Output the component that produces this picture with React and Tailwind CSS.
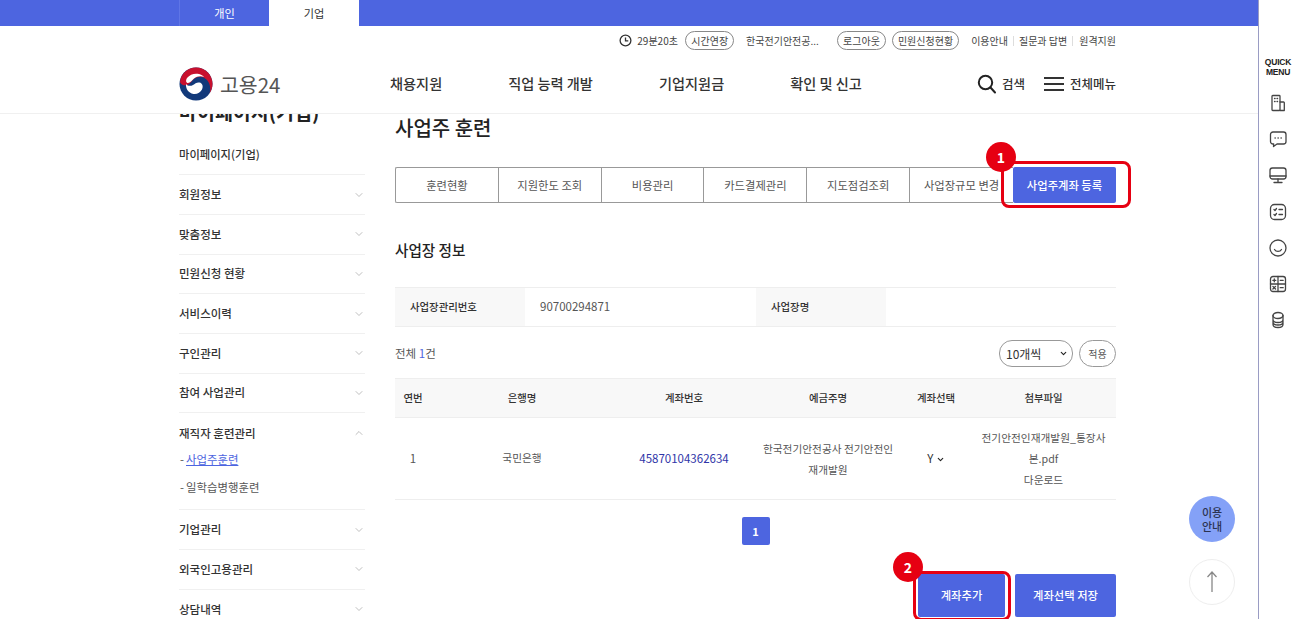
import React from "react";
import { ChevronDown, ChevronUp } from "lucide-react";

const menu = [
  { t: "회원정보" }, { t: "맞춤정보" }, { t: "민원신청 현황" }, { t: "서비스이력" }, { t: "구인관리" }, { t: "참여 사업관리" },
];
const menu2 = [{ t: "기업관리" }, { t: "외국인고용관리" }, { t: "상담내역" }];
const tabs = ["훈련현황", "지원한도 조회", "비용관리", "카드결제관리", "지도점검조회", "사업장규모 변경"];

function SideRow({ t }) {
  return (
    <div className="h-[39.7px] flex items-center justify-between border-b border-[#f0f0f0]">
      <span className="text-[11.500px] font-medium text-[#333]">{t}</span>
      <ChevronDown size={12} strokeWidth={1.5} className="text-[#aaa]" />
    </div>
  );
}

function Pill({ children, className = "" }) {
  return <span className={"h-[19px] px-[5px] flex items-center rounded-full border border-[#888] text-[10px] text-[#444] whitespace-nowrap " + className}>{children}</span>;
}

function Logo() {
  return (
    <svg width="34" height="34" viewBox="0 0 34 34" className="shrink-0">
      <circle cx="17" cy="17" r="16.5" fill="#12397a" />
      <path d="M1 15C2 6 9 .5 17 .5c9 0 16.5 7 16.5 16.5 0 4-1.400 7-3 9.500 1-3 1-6 .2-8.500C29 12 24 9 19 10c-3 .6-5 2.500-6.500 4.500C10 18 6 19 4 18c-1.500-.6-2.500-1.500-3-3z" fill="#c8102e" />
      <path d="M7 17c1.500 2 4.500 2.500 7 1 2-1.500 4-3 6.500-2.500 3 .5 4 4 2.500 7-1.500 3-5 5-8.500 4.500C9 26 6.500 21 7 17z" fill="#fff" />
      <path d="M8 11c3-4 8-5 12-4 2 .5 4 1.500 5 3-3-1.500-7-1-10 1.500-2 1.700-4 4.500-6 4.500-2 0-2.500-2.500-1-5z" fill="#fff" />
    </svg>
  );
}

const I = ({ children }) => (
  <svg width="20" height="20" viewBox="0 0 20 20" fill="none" stroke="#444" strokeWidth="1.300" strokeLinecap="round" strokeLinejoin="round">{children}</svg>
);

const quick = [
  <I key="1"><rect x="4" y="2.500" width="8" height="15" rx=".8" /><path d="M12 9h3.500a.8.800 0 0 1 .8.800v7.700H12M6.500 5.500h.6M9 5.500h.6M6.500 8.500h.6M9 8.500h.6" /></I>,
  <I key="2"><path d="M5 3h10.500A2.500 2.500 0 0 1 18 5.500v7a2.500 2.500 0 0 1-2.500 2.500H9l-3.500 2.500.2-2.500H5a2.500 2.500 0 0 1-2.500-2.500v-7A2.500 2.500 0 0 1 5 3z" /><path d="M7 9h.3M10 9h.3M13 9h.3" /></I>,
  <I key="3"><rect x="2" y="3" width="16" height="11" rx="2.500" /><path d="M2 11h16M10 14v3.500M6 17.500h8" /></I>,
  <I key="4"><rect x="2.500" y="2.500" width="15" height="15" rx="4" /><path d="M6 7.500l1 1 1.500-2M11 7.500h3.500M6 12.500l1 1 1.500-2M11 12.500h3.500" /></I>,
  <I key="5"><circle cx="10" cy="10" r="8" /><path d="M6.500 11.500c1.500 2.500 5.500 2.500 7 0" /></I>,
  <I key="6"><rect x="2.500" y="2.500" width="15" height="15" rx="2.500" /><path d="M10 2.500v15M2.500 10h15M4.800 6.300h3M6.300 4.800v3M12.200 6.300h3M4.900 12.400l2.600 2.600M7.500 12.400l-2.600 2.600M12.200 13.700h3" /></I>,
  <I key="7"><ellipse cx="10" cy="5.500" rx="5" ry="3" /><path d="M5 5.500v9c0 1.700 2.200 3 5 3s5-1.300 5-3v-9M5 9.500c0 1.700 2.200 3 5 3s5-1.300 5-3M5 12c0 1.700 2.200 3 5 3s5-1.300 5-3" /></I>,
];

export default function App() {
  return (
    <div className="relative flex w-[1298px] h-[619px] overflow-hidden bg-white text-[#333]" style={{ fontFamily: '"Noto Sans CJK KR","Noto Sans",sans-serif' }}>
      <div className="w-[1258px] shrink-0 flex flex-col">
        {/* top bar */}
        <div className="h-[26px] bg-[#4d65e0] pl-[179px] flex shrink-0">
          <div className="w-[90px] flex items-center justify-center text-[11.200px] text-white border-l border-[#5f75e6]">개인</div>
          <div className="w-[90px] flex items-center justify-center text-[11.200px] text-[#333] bg-white">기업</div>
        </div>

        {/* utility row */}
        <div className="h-[29px] shrink-0 flex items-center justify-end pr-[142px] text-[10px] text-[#444] whitespace-nowrap">
          <svg width="13" height="13" viewBox="0 0 14 14" fill="none" stroke="#333" strokeWidth="1.400" className="mr-[5px]"><circle cx="7" cy="7" r="5.800" /><path d="M7 3.800V7.300h3" /></svg>
          <span className="w-[43px]">29분20초</span>
          <Pill className="ml-[5px]">시간연장</Pill>
          <span className="ml-[12px] w-[73px]">한국전기안전공...</span>
          <Pill className="ml-[18px]">로그아웃</Pill>
          <Pill className="ml-[6px]">민원신청현황</Pill>
          <span className="ml-[12px]">이용안내</span>
          <span className="ml-[5px] mr-[5px] h-[10px] w-px bg-[#ddd]" />
          <span>질문과 답변</span>
          <span className="ml-[5px] mr-[6px] h-[10px] w-px bg-[#ddd]" />
          <span>원격지원</span>
        </div>

        {/* header */}
        <div className="h-[59px] shrink-0 flex items-center pl-[179px] pr-[142px] border-b border-[#f0f0f0] relative z-10 bg-white">
          <Logo />
          <span className="ml-[7px] w-[170px] text-[20.500px] text-[#555] leading-none">고용24</span>
          <nav className="flex gap-[66px] text-[14.200px] font-medium text-[#333]">
            <span>채용지원</span>
            <span>직업 능력 개발</span>
            <span>기업지원금</span>
            <span>확인 및 신고</span>
          </nav>
          <div className="ml-auto flex items-center">
            <svg width="20" height="20" viewBox="0 0 20 20" fill="none" stroke="#222" strokeWidth="2" strokeLinecap="round" className="ml-[1px]"><circle cx="8.500" cy="8.500" r="6.700" /><path d="M13.500 13.500L18 18.500" /></svg>
            <span className="ml-[5px] text-[12.500px] font-medium">검색</span>
            <svg width="20" height="16" viewBox="0 0 20 16" stroke="#333" strokeWidth="2" className="ml-[19px]"><path d="M0 2h20M0 8h20M0 14h20" /></svg>
            <span className="ml-[6px] text-[12.500px] font-medium">전체메뉴</span>
          </div>
        </div>

        {/* body */}
        <div className="flex-1 min-h-0 overflow-hidden flex pl-[179px]">
          <aside className="w-[186px] shrink-0">
            <div className="-mt-[15px] h-[26px] flex items-center text-[19.500px] font-bold text-[#222] leading-none">마이페이지(기업)</div>
            <div className="h-[50.300px] flex items-end pb-[11px] border-b border-[#f0f0f0]">
              <span className="text-[11.300px] font-medium text-[#333]">마이페이지(기업)</span>
            </div>
            {menu.map((m) => <SideRow key={m.t} t={m.t} />)}
            <div className="h-[97px] border-b border-[#f0f0f0] pt-[11px]">
              <div className="flex items-center justify-between h-[18px]">
                <span className="text-[11.500px] font-medium text-[#333]">재직자 훈련관리</span>
                <ChevronUp size={12} strokeWidth={1.5} className="text-[#aaa]" />
              </div>
              <div className="mt-[8px] text-[11.400px] text-[#555] leading-[18px] flex"><span className="w-[7px] pl-[1px]">-</span><span className="text-[#4d65e0] underline">사업주훈련</span></div>
              <div className="mt-[10px] text-[11.400px] text-[#555] leading-[18px] flex"><span className="w-[7px] pl-[1px]">-</span><span>일학습병행훈련</span></div>
            </div>
            {menu2.map((m) => <SideRow key={m.t} t={m.t} />)}
          </aside>

          <main className="ml-[30px] w-[721px] shrink-0">
            <h1 className="mt-[1px] h-[26px] flex items-center text-[20px] font-medium text-[#222]">사업주 훈련</h1>

            <div className="mt-[26px] flex h-[36px]">
              <div className="flex w-[618px] border border-[#999] border-r-0 rounded-l-[2px]">
                {tabs.map((t) => (
                  <div key={t} className="w-[103px] border-r border-[#999] last:border-r-0 flex items-center justify-center text-[11.300px] text-[#555] whitespace-nowrap">{t}</div>
                ))}
              </div>
              <div className="w-[103px] bg-[#4d65e0] rounded-[2px] flex items-center justify-center text-[11.300px] font-medium text-white">사업주계좌 등록</div>
            </div>

            <h2 className="mt-[35px] h-[24px] flex items-center text-[14.600px] font-medium text-[#222]">사업장 정보</h2>

            <div className="mt-[25px] h-[40px] flex border-y border-[#eee]">
              <div className="w-[130px] bg-[#f8f8f8] pl-[15px] flex items-center font-medium text-[10.400px] text-[#333]">사업장관리번호</div>
              <div className="w-[231px] pl-[15px] flex items-center text-[11.500px] text-[#555]">90700294871</div>
              <div className="w-[130px] bg-[#f8f8f8] pl-[15px] flex items-center font-medium text-[10.400px] text-[#333]">사업장명</div>
            </div>

            <div className="mt-[13px] h-[27px] flex items-center text-[11.500px] text-[#555]">
              <span>전체 <span className="text-[#4d65e0]">1</span>건</span>
              <div className="ml-auto w-[74px] h-[27px] rounded-[13px] border border-[#999] flex items-center justify-between pl-[6px] pr-[4px] text-[12px] text-[#333]">
                10개씩
                <ChevronDown size={9} strokeWidth={3} className="text-[#222]" />
              </div>
              <div className="ml-[6px] w-[37px] h-[27px] rounded-full border border-[#999] flex items-center justify-center text-[10px]">적용</div>
            </div>

            <table className="mt-[11px] w-[721px] table-fixed text-[10.700px] text-[#555] text-center">
              <colgroup>
                <col className="w-[36px]" />
                <col className="w-[182px]" />
                <col className="w-[142px]" />
                <col className="w-[146px]" />
                <col className="w-[70px]" />
                <col />
              </colgroup>
              <thead>
                <tr className="h-[39px] bg-[#f8f8f8] border-y border-[#eee] text-[10.400px] text-[#333]">
                  <th className="font-medium">연번</th>
                  <th className="font-medium">은행명</th>
                  <th className="font-medium">계좌번호</th>
                  <th className="font-medium">예금주명</th>
                  <th className="font-medium">계좌선택</th>
                  <th className="font-medium">첨부파일</th>
                </tr>
              </thead>
              <tbody>
                <tr className="h-[82px] border-b border-[#eee]">
                  <td className="text-[11.500px]">1</td>
                  <td>국민은행</td>
                  <td className="text-[11.500px] text-[#2f35a8]">45870104362634</td>
                  <td className="leading-[21px]">한국전기안전공사 전기안전인<br />재개발원</td>
                  <td className="text-[11.500px] text-[#333]">Y <ChevronDown size={9} strokeWidth={3} className="inline text-[#222] -mt-[1px]" /></td>
                  <td className="leading-[21px] whitespace-nowrap">전기안전인재개발원_통장사<br />본.pdf<br />다운로드</td>
                </tr>
              </tbody>
            </table>

            <div className="mt-[17px] flex justify-center">
              <div className="w-[28px] h-[28px] rounded-[2px] bg-[#4d65e0] text-white text-[11px] font-bold flex items-center justify-center">1</div>
            </div>

            <div className="mt-[29px] flex justify-end gap-[10px]">
              <div className="w-[87px] h-[43px] rounded-[2px] bg-[#4d65e0] text-white text-[11.300px] font-medium flex items-center justify-center">계좌추가</div>
              <div className="w-[101px] h-[43px] rounded-[2px] bg-[#4d65e0] text-white text-[11.300px] font-medium flex items-center justify-center">계좌선택 저장</div>
            </div>
          </main>
        </div>
      </div>

      {/* quick menu */}
      <aside className="w-[40px] shrink-0 border-l border-[#9a9cc4] flex flex-col items-center pr-[1px]">
        <div className="mt-[57px] text-[8.500px] leading-[10px] font-bold text-[#222] text-center tracking-tight" style={{ fontFamily: '"Liberation Sans",sans-serif' }}>QUICK<br />MENU</div>
        <div className="mt-[16px] flex flex-col gap-[16.200px]">{quick}</div>
      </aside>

      {/* annotations */}
      <div className="absolute left-[1001px] top-[161px] w-[130px] h-[47px] border-[3px] border-[#e60012] rounded-[8px]" />
      <div className="absolute left-[986px] top-[142px] w-[30px] h-[30px] rounded-full bg-[#e60012] text-white text-[14px] font-bold flex items-center justify-center">1</div>
      <div className="absolute left-[913px] top-[571px] w-[98px] h-[50px] border-[3px] border-[#e60012] rounded-[8px]" />
      <div className="absolute left-[893px] top-[552px] w-[30px] h-[30px] rounded-full bg-[#e60012] text-white text-[14px] font-bold flex items-center justify-center">2</div>

      {/* floating */}
      <div className="absolute left-[1189px] top-[496px] w-[46px] h-[46px] rounded-full bg-[#84a1f7] flex items-center justify-center text-center text-[11px] leading-[14px] font-medium text-[#2b3350]">이용<br />안내</div>
      <div className="absolute left-[1189px] top-[559px] w-[46px] h-[46px] rounded-full border border-[#eee] bg-white flex items-center justify-center">
        <svg width="12" height="22" viewBox="0 0 12 22" fill="none" stroke="#888" strokeWidth="1.300"><path d="M6 21V1M1.500 6L6 1l4.500 5" /></svg>
      </div>
    </div>
  );
}
